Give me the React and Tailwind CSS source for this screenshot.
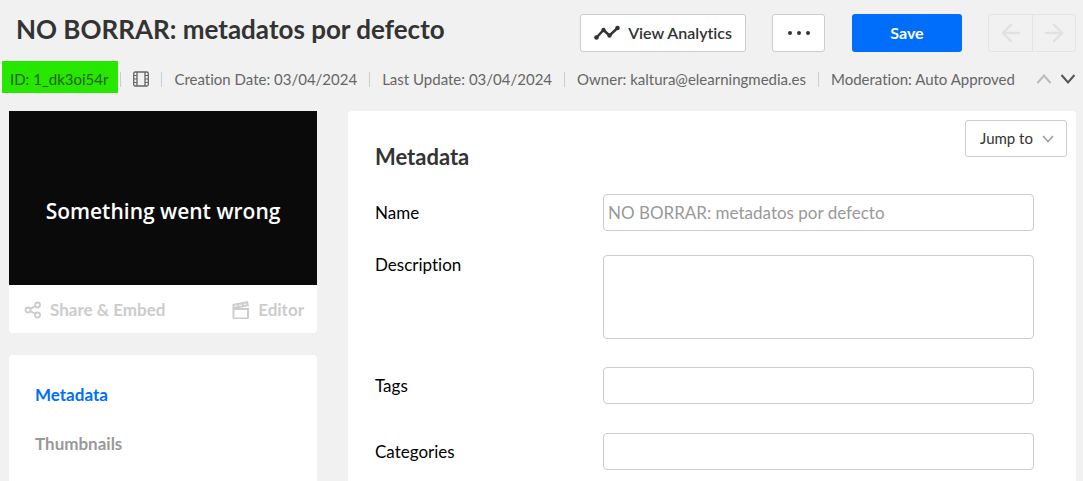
import { useState } from "react";
import { ArrowLeft, ArrowRight } from "lucide-react";

const details = [
  { label: "Creation Date", value: "03/04/2024" },
  { label: "Last Update", value: "03/04/2024" },
  { label: "Owner", value: "kaltura@elearningmedia.es" },
  { label: "Moderation", value: "Auto Approved" },
];

const sections = ["Metadata", "Thumbnails"];

function Chevron({ up, className }) {
  return (
    <svg viewBox="0 0 16 12" fill="none" stroke="currentColor" className={className}>
      <path d={up ? "M1.5 10 8 2.5l6.5 7.5" : "M1.5 2 8 9.5 14.5 2"} strokeWidth="2" />
    </svg>
  );
}

function AnalyticsIcon() {
  return (
    <svg viewBox="0 0 26 16" className="w-[26px] h-4" fill="currentColor">
      <path d="M2.5 12.5 9.5 5l6 5.5L23.5 3" fill="none" stroke="currentColor" strokeWidth="2.4" />
      <circle cx="2.5" cy="12.5" r="2.3" />
      <circle cx="9.5" cy="5" r="2.2" />
      <circle cx="15.5" cy="10.5" r="2.2" />
      <circle cx="23.5" cy="3" r="2.3" />
    </svg>
  );
}

function FilmIcon() {
  return (
    <svg viewBox="0 0 16 16" className="w-4 h-4" fill="none" stroke="currentColor">
      <rect x="0.7" y="1" width="14.6" height="14" rx="1.5" strokeWidth="1.3" />
      <path d="M4 1v14M12 1v14" strokeWidth="1.3" />
      <path d="M1 4.5h3M1 8h3M1 11.5h3M12 4.5h3M12 8h3M12 11.5h3" />
    </svg>
  );
}

function ShareIcon() {
  return (
    <svg viewBox="0 0 18 18" className="w-[18px] h-[18px]" fill="none" stroke="currentColor" strokeWidth="1.8">
      <circle cx="4" cy="9" r="2.5" />
      <circle cx="13.5" cy="4" r="2.5" />
      <circle cx="13.5" cy="14" r="2.5" />
      <path d="m6.3 7.9 5-2.7M6.3 10.100l5 2.700" />
    </svg>
  );
}

function ClapperIcon() {
  return (
    <svg viewBox="0 0 18 18" className="w-[18px] h-[18px]" fill="none" stroke="currentColor" strokeWidth="1.9">
      <path d="M1.5 8h14.500v8.500a1 1 0 0 1-1 1H2.500a1 1 0 0 1-1-1z" />
      <path d="M1.5 8V3.700L15.200 1.200l.6 3L2 7M5.500 3.200 7 6M10 2.300 11.500 5" />
    </svg>
  );
}

function Divider() {
  return <span className="w-px h-[15px] bg-[#cccccc]" />;
}

const labelClass = "w-[228px] shrink-0 text-[17px] leading-5 text-black";
const inputClass =
  "block flex-1 min-w-0 h-[37px] px-1 border border-[#cccccc] rounded-[4px] bg-white text-[17px] text-[#333333] placeholder:text-[#999999]";

export default function App() {
  const [active, setActive] = useState("Metadata");

  return (
    <div className="min-h-screen flex flex-col bg-[#f1f1f1] font-['Lato',sans-serif] text-[#333333] [font-variant-ligatures:none]">
      {/* Title and actions */}
      <header className="flex items-center pt-[14px] pl-4 pr-[7px]">
        <h1 className="flex-1 pb-2 text-[26px] leading-[30px] font-bold whitespace-nowrap">
          NO BORRAR: metadatos por defecto
        </h1>
        <button className="flex items-center gap-2 h-[38px] px-[13px] bg-white border border-[#cccccc] rounded-[3px] text-base font-semibold">
          <AnalyticsIcon />
          View Analytics
        </button>
        <button
          aria-label="More actions"
          className="flex items-center justify-center gap-[5px] w-[53px] h-[38px] ml-[26px] bg-white border border-[#cccccc] rounded-[3px]"
        >
          <span className="w-1 h-1 rounded-full bg-[#333333]" />
          <span className="w-1 h-1 rounded-full bg-[#333333]" />
          <span className="w-1 h-1 rounded-full bg-[#333333]" />
        </button>
        <button className="w-[110px] h-[38px] ml-[27px] bg-[#006efa] rounded-[3px] text-base font-bold text-white">
          Save
        </button>
        <div className="flex ml-[26px] h-[38px] border border-[#e4e4e4] rounded-[3px] text-[#e1e1e1]">
          <button aria-label="Previous" disabled className="flex items-center justify-center w-[43px]">
            <ArrowLeft size={28} strokeWidth={2} />
          </button>
          <button aria-label="Next" disabled className="flex items-center justify-center w-[43px] border-l border-[#e4e4e4]">
            <ArrowRight size={28} strokeWidth={2} />
          </button>
        </div>
      </header>

      {/* Entry details */}
      <div className="flex items-center gap-3 h-9 mt-[9px] pl-[2px] pr-[7px] text-[15px] text-[#666666] whitespace-nowrap">
        <span className="self-start h-8 pl-2 pr-[10px] -mr-[10px] bg-[#27e600] text-[#29611c] leading-9">
          ID: 1_dk3oi54r
        </span>
        <Divider />
        <FilmIcon />
        {details.map((d) => (
          <div key={d.label} className="flex items-center gap-3">
            <Divider />
            <span>
              {d.label}: {d.value}
            </span>
          </div>
        ))}
        <div className="flex gap-2 ml-auto">
          <button aria-label="Scroll up" className="text-[#bbbbbb]">
            <Chevron up className="w-4 h-3" />
          </button>
          <button aria-label="Scroll down" className="text-[#555555]">
            <Chevron className="w-4 h-3" />
          </button>
        </div>
      </div>

      <div className="flex flex-1 gap-[31px] pt-[14px] pl-[9px] pr-[7px]">
        {/* Preview and section list */}
        <aside className="flex flex-col w-[308px] shrink-0">
          <div className="flex items-center justify-center h-[174px] pt-7 bg-[#0a0a0a] text-white text-[21px] font-semibold font-['Open_Sans',sans-serif]">
            Something went wrong
          </div>
          <div className="flex items-center justify-between h-12 pt-[2px] pl-[15px] pr-[13px] bg-white rounded-b-[4px] text-[17px] font-bold text-[#cccccc]">
            <button disabled className="flex items-center gap-2">
              <ShareIcon />
              Share &amp; Embed
            </button>
            <button disabled className="flex items-center gap-2">
              <ClapperIcon />
              Editor
            </button>
          </div>
          <nav className="flex flex-col flex-1 gap-[25px] mt-[22px] px-[26px] pt-7 bg-white rounded-t-[4px]">
            {sections.map((s) => (
              <a
                key={s}
                href={"#" + s.toLowerCase()}
                onClick={() => setActive(s)}
                className={`text-[17px] leading-6 font-bold ${
                  active === s ? "text-[#006efa]" : "text-[#999999]"
                }`}
              >
                {s}
              </a>
            ))}
          </nav>
        </aside>

        {/* Metadata form */}
        <main className="flex-1 min-w-0 bg-white rounded-t-[4px] pl-[27px] pr-[9px] pt-[9px]">
          <div className="flex items-start justify-between">
            <h2 className="pt-[21px] text-[22px] leading-8 font-bold">Metadata</h2>
            <div className="relative">
              <select
                aria-label="Jump to"
                className="appearance-none w-[102px] h-[37px] pl-[14px] bg-white border border-[#cccccc] rounded-[3px] text-[15px]"
              >
                <option>Jump to</option>
              </select>
              <Chevron className="absolute right-[13px] top-[14px] w-3 h-[10px] text-[#999999] pointer-events-none" />
            </div>
          </div>

          <form className="flex flex-col mt-[21px] pr-[33px]">
            <div className="flex items-center">
              <label htmlFor="name" className={labelClass}>Name</label>
              <input id="name" type="text" placeholder="NO BORRAR: metadatos por defecto" className={inputClass} />
            </div>
            <div className="flex items-start mt-6">
              <label htmlFor="description" className={labelClass}>Description</label>
              <textarea
                id="description"
                className="block flex-1 min-w-0 h-[84px] p-1 border border-[#cccccc] rounded-[4px] bg-white text-[17px] resize-none"
              />
            </div>
            <div className="flex items-center mt-7">
              <label htmlFor="tags" className={labelClass}>Tags</label>
              <input id="tags" type="text" className={inputClass} />
            </div>
            <div className="flex items-center mt-[29px]">
              <label htmlFor="categories" className={labelClass}>Categories</label>
              <input id="categories" type="text" className={inputClass} />
            </div>
          </form>
        </main>
      </div>
    </div>
  );
}
